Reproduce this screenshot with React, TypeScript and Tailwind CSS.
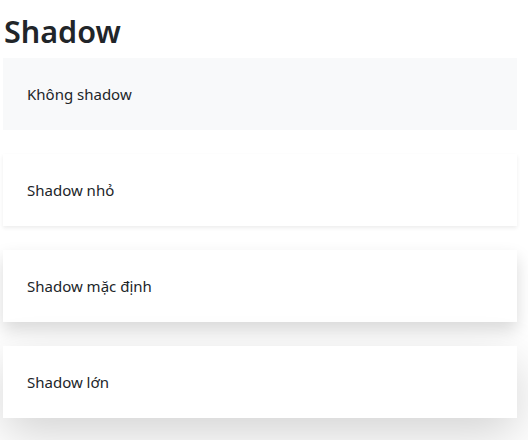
export default function App() {
  const cards = [
    { label: 'Không shadow', cls: 'bg-[#f8f9fa] shadow-none' },
    { label: 'Shadow nhỏ', cls: 'bg-white shadow-[0_2px_4px_rgba(0,0,0,0.075)]' },
    { label: 'Shadow mặc định', cls: 'bg-white shadow-[0_8px_16px_rgba(0,0,0,0.15)]' },
    { label: 'Shadow lớn', cls: 'bg-white shadow-[0_16px_48px_rgba(0,0,0,0.175)]' },
  ]

  return (
    <div
      className="min-h-screen bg-white pl-[3px] pr-[11px] pt-[12px] text-[#212529]"
      style={{ fontFamily: '"Segoe UI", "Noto Sans", "Open Sans", sans-serif' }}
    >
      <h2 className="mb-2 pl-px text-[30.5px] font-semibold leading-[38px]">Shadow</h2>

      <div className="flex flex-col gap-6">
        {cards.map((card) => (
          <div key={card.label} className={`p-6 text-[15px] leading-6 ${card.cls}`}>
            {card.label}
          </div>
        ))}
      </div>
    </div>
  )
}
